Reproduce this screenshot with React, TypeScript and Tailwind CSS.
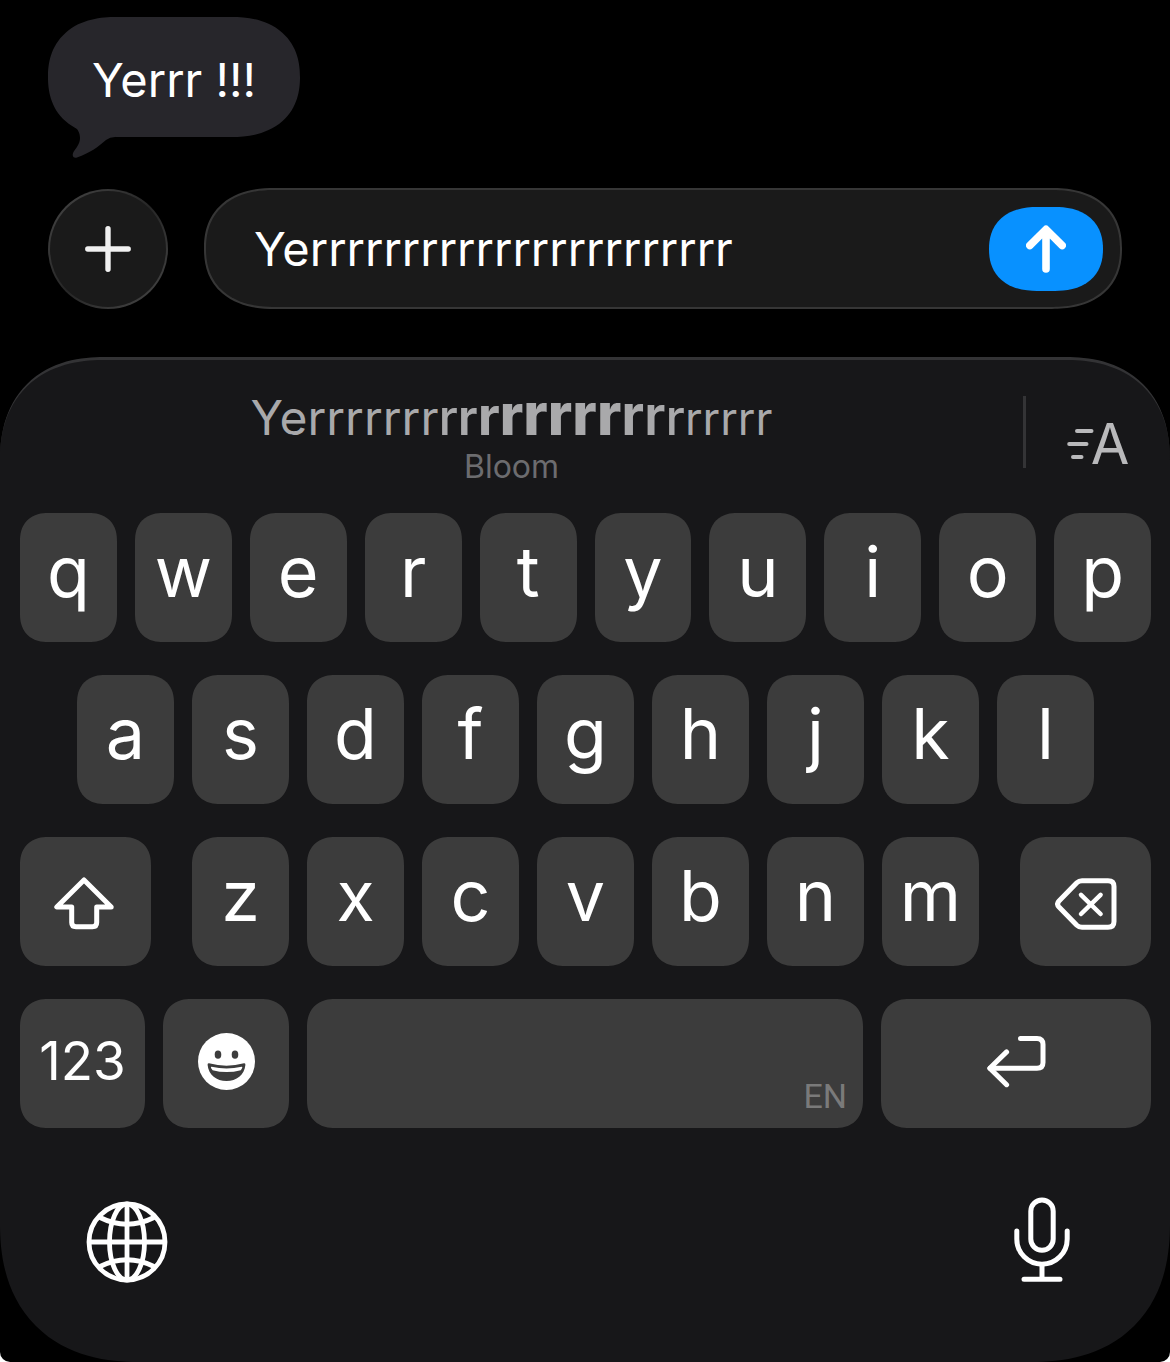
import React, { useState } from "react";

const LETTERS_TOP = ["q", "w", "e", "r", "t", "y", "u", "i", "o", "p"];
const LETTERS_MIDDLE = ["a", "s", "d", "f", "g", "h", "j", "k", "l"];
const LETTERS_BOTTOM = ["z", "x", "c", "v", "b", "n", "m"];

// the bloom effect swells letters towards the middle of the word
const BLOOM: { text: string; style: string }[] = [
  { text: "Yerrrrrrr", style: "text-[48px] font-normal" },
  { text: "r", style: "text-[50px] font-medium" },
  { text: "r", style: "text-[50px] font-semibold" },
  { text: "r", style: "text-[54px] font-bold" },
  { text: "r", style: "text-[56px] font-extrabold" },
  { text: "rrrr", style: "text-[58px] font-extrabold" },
  { text: "r", style: "text-[56px] font-bold" },
  { text: "r", style: "text-[54px] font-semibold" },
  { text: "r", style: "text-[50px] font-medium" },
  { text: "rrrrr", style: "text-[45px] font-normal" },
];

interface KeyProps {
  label: string;
  className?: string;
  onClick?: () => void;
  children: React.ReactNode;
}

const Key: React.FC<KeyProps> = ({ label, className = "flex-1", onClick, children }) => (
  <button
    type="button"
    aria-label={label}
    onClick={onClick}
    className={`flex h-[129px] min-w-0 items-center justify-center rounded-[28px] bg-[#3c3c3c] text-white [corner-shape:superellipse(1.2)] ${className}`}
  >
    {children}
  </button>
);

const ShiftIcon = () => (
  <svg width="60" height="53" viewBox="0 0 60 53" fill="none" stroke="currentColor" strokeWidth="5" strokeLinejoin="round">
    <path d="M30 3 L2.8 30 H17.7 V45.5 Q17.7 49.7 22 49.7 H38.5 Q42.7 49.7 42.7 45.5 V30 H57.2 Z" />
  </svg>
);

const DeleteIcon = () => (
  <svg width="62" height="52" viewBox="0 0 62 52" fill="none" stroke="currentColor" strokeWidth="5" strokeLinecap="round" strokeLinejoin="round">
    <path d="M27 2.7 H53 Q59 2.7 59 8.5 V43.5 Q59 49.3 53 49.3 H27 Q24 49.3 21.8 47.2 L4 29 Q1.2 26 4 23 L21.8 4.8 Q24 2.7 27 2.7 Z" />
    <path d="M26 16.8 L45.6 36 M45.6 16.8 L26 36" strokeWidth="4.5" />
  </svg>
);

const ReturnIcon = () => (
  <svg width="59" height="52" viewBox="0 0 59 52" fill="none" stroke="currentColor" strokeWidth="5" strokeLinecap="round" strokeLinejoin="round">
    <path d="M33.5 2.6 H50 Q56 2.6 56 8.6 V26.5 Q56 32.3 50 32.3 H3" />
    <path d="M19.6 15.9 L2.8 32.3 L19.6 48.7" />
  </svg>
);

const EmojiIcon = () => (
  <svg width="57" height="57" viewBox="0 0 57 57">
    <circle cx="28.5" cy="28.5" r="28.5" fill="white" />
    <ellipse cx="20" cy="21.7" rx="3.3" ry="4.1" fill="#3c3c3c" />
    <ellipse cx="37" cy="21.7" rx="3.3" ry="4.1" fill="#3c3c3c" />
    <path d="M11 30.3 Q28.5 35 46 30.3 Q47.6 30 47.4 32 C46.4 42 38.5 48 28.5 48 C18.5 48 10.6 42 9.6 32 Q9.4 30 11 30.3 Z" fill="#3c3c3c" />
    <path d="M13.6 33.8 Q28.5 37 43.6 33.8 Q44.6 33.8 44.2 35 L42.8 37.2 Q28.5 41 14.6 37.2 L13 35 Q12.6 33.8 13.6 33.8 Z" fill="white" />
  </svg>
);

const GlobeIcon = () => (
  <svg width="82" height="82" viewBox="-41 -41 82 82" fill="none" stroke="currentColor" strokeWidth="4.8">
    <circle r="38" />
    <ellipse rx="17.5" ry="38" />
    <path d="M0 -38 V38 M-38 0 H38" />
    <path d="M-27 -24.5 Q0 -11 27 -24.5 M-27 24.5 Q0 11 27 24.5" />
  </svg>
);

const MicIcon = () => (
  <svg width="56" height="86" viewBox="0 0 56 86" fill="none" stroke="currentColor" strokeWidth="5" strokeLinecap="round">
    <rect x="16.8" y="3" width="22.4" height="50.3" rx="11.2" />
    <path d="M2.8 34 V42 A25.2 25.2 0 0 0 53.2 42 V34" />
    <path d="M28 68 V82 M10 82.3 H46" />
  </svg>
);

export default function App() {
  const [message, setMessage] = useState("Yerrrrrrrrrrrrrrrrrrrrrrr");

  const type = (char: string) => setMessage(message + char);

  const renderLetters = (letters: string[]) =>
    letters.map((letter) => (
      <Key key={letter} label={letter} onClick={() => type(letter)}>
        <span className="pb-3 text-[70px] leading-none">{letter}</span>
      </Key>
    ));

  return (
    <div className="overflow-hidden rounded-b-[10px] bg-black font-['Inter',sans-serif] text-white">
      <main className="px-12 pt-[17px]">
        <div className="relative flex h-[120px] w-fit items-center rounded-[68px/60px] bg-[#27262b] px-11 pt-1 text-[47px] leading-none [corner-shape:superellipse(1.2)]">
          Yerrr !!!
          <svg className="absolute top-[98px] left-3" width="56" height="44" viewBox="0 0 56 44" fill="#27262b">
            <path d="M3 0 C8 5 10 8 13 10 C18 14 20 18 20 23 C20 29 16 33 13.5 37 C12 40 12.5 43.5 17 42.5 C30 38 38 32 46 25 Q50 22 55 22 V0 Z" />
          </svg>
        </div>

        <form className="mt-[51px] flex items-center gap-9" onSubmit={(e) => e.preventDefault()}>
          <button
            type="button"
            aria-label="Add attachment"
            className="flex size-[120px] shrink-0 items-center justify-center rounded-full border-2 border-transparent text-[#f0f0f0] [background:linear-gradient(#1a1a1a,#1a1a1a)_padding-box,linear-gradient(135deg,#484848,#262626_50%,#484848)_border-box]"
          >
            <svg width="46" height="46" viewBox="0 0 46 46" stroke="currentColor" strokeWidth="5.4" strokeLinecap="round">
              <path d="M23 2.8 V43.2 M2.8 23 H43.2" />
            </svg>
          </button>
          <div className="flex h-[121px] min-w-0 flex-1 items-center rounded-[70px/60px] border-2 border-[#363636] bg-[#1a1a1a] pr-[17px] pl-12 [corner-shape:superellipse(1.2)]">
            <input
              aria-label="Message"
              value={message}
              onChange={(e) => setMessage(e.target.value)}
              className="min-w-0 flex-1 bg-transparent pt-0.5 text-[47px] outline-none"
            />
            <button
              type="submit"
              aria-label="Send"
              className="flex h-[84px] w-[114px] shrink-0 items-center justify-center rounded-[48px/42px] bg-[#0891ff] [corner-shape:superellipse(1.2)]"
            >
              <svg width="40" height="48" viewBox="0 0 40 48" fill="none" stroke="white" strokeWidth="7.6" strokeLinecap="round" strokeLinejoin="round">
                <path d="M20 44 V5 M3.8 20.5 L20 4.4 L36.2 20.5" />
              </svg>
            </button>
          </div>
        </form>
      </main>

      <section aria-label="Keyboard" className="mt-12 rounded-t-[104px] rounded-b-[138px] border-t-[3px] border-[#333335] bg-[#171719] [corner-shape:superellipse(1.2)]">
        <div className="flex h-[153px]">
          <button type="button" className="flex flex-1 flex-col items-center pt-5 text-[#a9a9ab]">
            <span className="flex h-[71px] items-baseline leading-[68px]">
              {BLOOM.map((part, i) => (
                <span key={i} className={part.style}>{part.text}</span>
              ))}
            </span>
            <span className="text-[32px] leading-8 text-[#6c6c6f]">Bloom</span>
          </button>
          <div className="mt-9 h-[72px] w-[3px] bg-[#343436]" />
          <button
            type="button"
            aria-label="Text effects"
            className="flex h-[168px] w-36 items-center justify-center text-[#b9b9bb]"
          >
            <svg className="-mr-1" width="28" height="32" viewBox="0 0 28 32" stroke="currentColor" strokeWidth="4" strokeLinecap="round">
              <path d="M10 3 H24.5 M2.2 16 H19.5 M6 29 H14.5" />
            </svg>
            <span className="text-[56px] leading-none">A</span>
          </button>
        </div>

        <div className="flex flex-col gap-[33px] pr-[19px] pl-5">
          <div className="flex gap-[18px]">{renderLetters(LETTERS_TOP)}</div>
          <div className="flex gap-[18px] px-[57px]">{renderLetters(LETTERS_MIDDLE)}</div>
          <div className="flex gap-[41px]">
            <Key label="Shift" className="w-[131px] pt-1 pr-1"><ShiftIcon /></Key>
            <div className="flex flex-1 gap-[18px]">{renderLetters(LETTERS_BOTTOM)}</div>
            <Key label="Delete" className="w-[131px] pt-1" onClick={() => setMessage(message.slice(0, -1))}>
              <DeleteIcon />
            </Key>
          </div>
          <div className="flex gap-[18px]">
            <Key label="Numbers" className="w-[125px]">
              <span className="pb-1 text-[53px] leading-none">123</span>
            </Key>
            <Key label="Emoji" className="w-[126px] pb-1"><EmojiIcon /></Key>
            <button
              type="button"
              aria-label="Space"
              onClick={() => type(" ")}
              className="flex h-[129px] min-w-0 flex-1 items-end justify-end rounded-[28px] bg-[#3c3c3c] px-4 pb-3 font-['Roboto',sans-serif] text-[34px] leading-10 text-[#7a7a7a] [corner-shape:superellipse(1.2)]"
            >
              EN
            </button>
            <Key label="Return" className="w-[270px] pb-1"><ReturnIcon /></Key>
          </div>
        </div>

        <div className="flex items-end justify-between pt-[69px] pr-[100px] pb-[79px] pl-[86px]">
          <button type="button" aria-label="Next keyboard"><GlobeIcon /></button>
          <button type="button" aria-label="Dictate"><MicIcon /></button>
        </div>
      </section>
    </div>
  );
}
